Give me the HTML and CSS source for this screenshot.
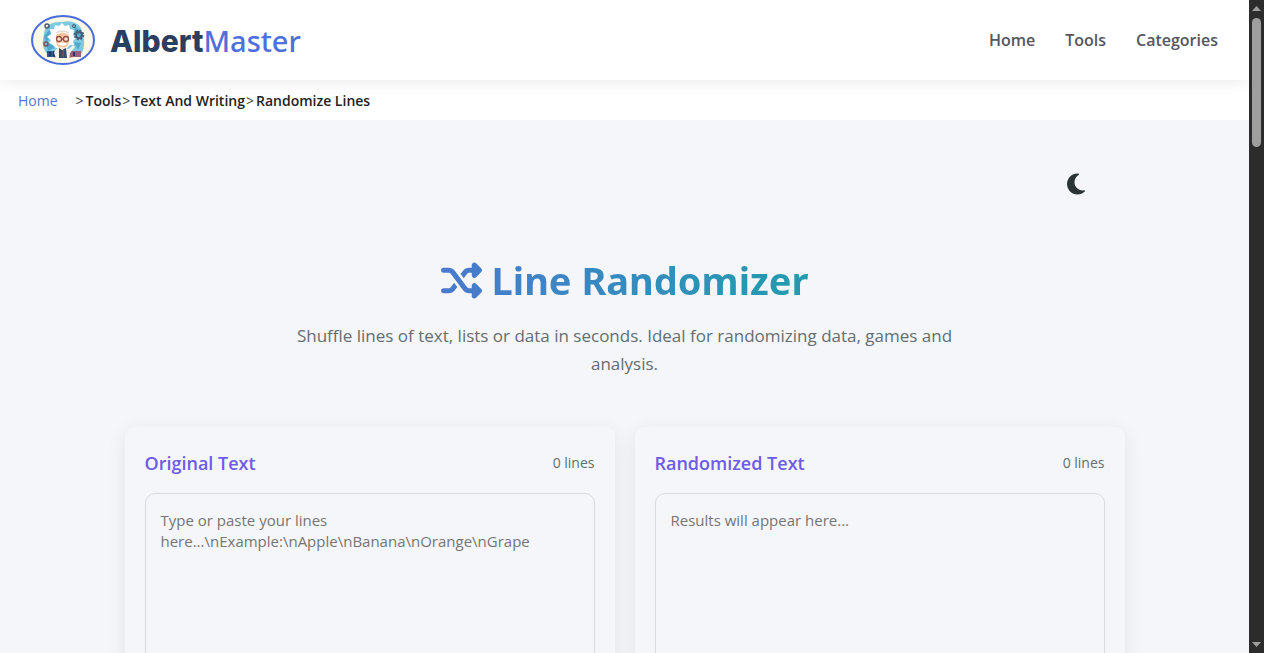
FILE: index.html
```html
<!DOCTYPE html>
<html lang="en">
<head>
<meta charset="utf-8">
<meta name="viewport" content="width=device-width, initial-scale=1">
<title>Line Randomizer - AlbertMaster</title>
<link rel="stylesheet" href="styles.css">
</head>
<body>
<div class="window">
  <div class="page">
    <header class="site-header">
      <a class="brand" href="#">
        <svg class="brand-logo" viewBox="0 0 64 50" aria-hidden="true">
          <defs><clipPath id="oval"><ellipse cx="32" cy="25" rx="31" ry="24"/></clipPath></defs>
          <ellipse cx="32" cy="25" rx="31" ry="24" fill="#fbf8e6"/>
          <g clip-path="url(#oval)">
            <path d="M14 14Q19 6 31 7Q44 4 50 13L53 24Q54 35 49 40L36 43L18 41Q10 33 12 24Z" fill="#7dc9df"/>
            <path d="M13 21l5-6 3 4-6 9zM43 11l6 4 2 8-7-5zM15 29l6-2 2 6-6 3zM43 27l7 1-3 7z" fill="#4fa9cc"/>
            <path d="M17 38l8-1 1 6-9-2zM37 37l11 0 1 4-12 2z" fill="#db8c89"/>
            <path d="M16 36h10v6H16z" fill="#30558c"/><path d="M39 36h11v6H39z" fill="#975f80"/>
            <path d="M18 37h2v4h-2zM22 37h2v4h-2zM42 37h2v4h-2z" fill="#223a68"/>
            <path d="M22 30l-4-2 2-3-4-3 4-3-1-5 4 0 1-4 4 1 3-3 3 3 4-1 1 4 4 1-1 5 3 3-3 3 1 4-4 0-3 3H25z" fill="#fff"/>
            <path d="M25 20q6-5 13 0v7q-1 6-6.500 6t-6.500-6z" fill="#f5c69c"/>
            <path d="M25 18q6-4 13 0" fill="none" stroke="#e2dbd5" stroke-width="1.500"/>
            <g fill="#f9e2ca" stroke="#944e47" stroke-width="1.300"><circle cx="28" cy="24" r="2.500"/><circle cx="35" cy="24" r="2.500"/><path d="M30.500 24h2"/></g>
            <path d="M26 29q5-3 11 0l-5 2z" fill="#fff"/>
            <path d="M25 34l6-2 7 2 4-4 2 2-5 6-1 5H25l-2-5z" fill="#f2f2eb"/>
            <path d="M28 33l3 2 4-2 1 10h-8z" fill="#344b6a"/>
            <path d="M32 35v7" stroke="#9b5960"/>
          </g>
          <g fill="none" stroke="#465b77">
            <circle cx="48" cy="20" r="3" stroke-width="2"/><circle cx="48" cy="20" r="4.500" stroke-width="1.500" stroke-dasharray="2 1.500"/>
            <circle cx="16" cy="11" r="2" stroke-width="1.500"/><circle cx="15" cy="29" r="2" stroke="#765164" stroke-width="1.500"/><circle cx="43" cy="11" r="1.500"/>
          </g>
          <ellipse cx="32" cy="25" rx="31" ry="24" fill="none" stroke="#4a6bdb" stroke-width="2"/>
        </svg>
        <span class="brand-name">Albert<span class="brand-accent">Master</span></span>
      </a>
      <nav class="site-nav" aria-label="Main">
        <a href="#">Home</a>
        <a href="#">Tools</a>
        <a href="#">Categories</a>
      </nav>
    </header>
    <nav class="breadcrumb" aria-label="Breadcrumb">
      <a href="#">Home</a><span>&gt;</span><b>Tools</b><span>&gt;</span><b>Text And Writing</b><span>&gt;</span><b>Randomize Lines</b>
    </nav>
    <main class="content">
      <div class="toolbar">
        <button class="theme-toggle" type="button" aria-label="Toggle dark mode">
          <svg viewBox="0 0 384 512" aria-hidden="true"><path d="M223.500 32C100 32 0 132.300 0 256S100 480 223.500 480c60.600 0 115.500-24.200 155.800-63.400c5-4.900 6.300-12.500 3.100-18.700s-10.100-9.700-17-8.500c-9.800 1.700-19.800 2.600-30.100 2.600c-96.900 0-175.500-78.800-175.500-176c0-65.800 36-123.100 89.300-153.300c6.100-3.500 9.200-10.500 7.700-17.300s-7.300-11.900-14.300-12.500c-6.300-.5-12.600-.8-19-.8z"/></svg>
        </button>
      </div>
      <div class="intro">
        <h1 class="title">
          <svg class="title-icon" viewBox="0 0 512 512" aria-hidden="true">
            <defs><linearGradient id="shuffle-fill"><stop offset="0" stop-color="#4a79cd"/><stop offset="1" stop-color="#467dca"/></linearGradient></defs>
            <path fill="url(#shuffle-fill)" d="M403.800 34.400c12-5 25.700-2.200 34.900 6.900l64 64c6 6 9.400 14.100 9.400 22.600s-3.400 16.600-9.400 22.600l-64 64c-9.200 9.200-22.900 11.900-34.900 6.900s-19.800-16.600-19.800-29.600V160H352c-10.100 0-19.600 4.700-25.600 12.800L284 229.300 244 176l31.200-41.600C293.300 110.200 321.800 96 352 96h32V64c0-12.900 7.800-24.600 19.800-29.600zM164 282.700L204 336l-31.200 41.600C154.700 401.800 126.200 416 96 416H32c-17.700 0-32-14.300-32-32s14.300-32 32-32H96c10.100 0 19.600-4.700 25.600-12.800L164 282.700zm274.600 188c-9.200 9.200-22.900 11.900-34.900 6.900s-19.800-16.600-19.800-29.600V416H352c-30.200 0-58.700-14.200-76.800-38.400L121.600 172.800c-6-8.100-15.500-12.800-25.600-12.800H32c-17.700 0-32-14.300-32-32s14.300-32 32-32H96c30.200 0 58.700 14.200 76.800 38.400L326.400 339.200c6 8.100 15.500 12.800 25.600 12.800h32V320c0-12.900 7.800-24.600 19.800-29.600s25.700-2.200 34.900 6.900l64 64c6 6 9.400 14.100 9.400 22.600s-3.400 16.600-9.400 22.600l-64 64z"/>
          </svg>
          <span class="title-text">Line Randomizer</span>
        </h1>
        <p class="subtitle">Shuffle lines of text, lists or data in seconds. Ideal for randomizing data, games and analysis.</p>
      </div>
      <div class="panels">
        <section class="panel">
          <div class="panel-head"><h2><label for="source">Original Text</label></h2><span class="count">0 lines</span></div>
          <textarea id="source" placeholder="Type or paste your lines here...\nExample:\nApple\nBanana\nOrange\nGrape"></textarea>
        </section>
        <section class="panel">
          <div class="panel-head"><h2><label for="result">Randomized Text</label></h2><span class="count">0 lines</span></div>
          <textarea id="result" placeholder="Results will appear here..." readonly></textarea>
        </section>
      </div>
    </main>
  </div>
  <div class="scrollbar" aria-hidden="true">
    <svg class="scroll-arrow" viewBox="0 0 15 8"><path d="M3 7l4.500-5L12 7z"/></svg>
    <div class="scroll-thumb"></div>
    <svg class="scroll-arrow scroll-down" viewBox="0 0 15 8"><path d="M3 1l4.500 5L12 1z"/></svg>
  </div>
</div>
</body>
</html>
```

FILE: styles.css
```css
* { box-sizing: border-box; }
body {
  margin: 0;
  font-family: "Open Sans", "Noto Sans", sans-serif;
  background: #f5f6fa;
  color: #2d3436;
}
h1, h2, p { margin: 0; }
a { text-decoration: none; }
.window { display: flex; height: 100vh; overflow: hidden; }
.page { flex: 1; min-width: 0; overflow: hidden; }

.site-header {
  position: relative;
  display: flex;
  align-items: center;
  justify-content: space-between;
  height: 80px;
  padding: 0 31px;
  background: #fff;
  box-shadow: 0 2px 15px rgba(0, 0, 0, 0.08);
}
.brand { display: flex; align-items: center; gap: 15px; }
.brand-logo { width: 64px; height: 50px; }
.brand-name {
  padding-top: 2px;
  font: 800 30px/40px Inter, sans-serif;
  color: #2c3e60;
}
.brand-accent {
  font-family: "Noto Sans", sans-serif;
  font-size: 29px;
  font-weight: 500;
  color: #4f6fdc;
}
.site-nav { display: flex; gap: 30px; }
.site-nav a {
  font: 600 16px/24px "Open Sans", sans-serif;
  color: #55565e;
}

.breadcrumb {
  display: flex;
  align-items: center;
  height: 40px;
  padding: 2px 18px 0;
  background: #fff;
  font: 400 14px/20px "Open Sans", sans-serif;
  color: #444;
}
.breadcrumb a { margin-right: 17px; color: #5775cf; }
.breadcrumb span { padding: 0 2px 0 1px; }
.breadcrumb b { font-weight: 600; color: #222; }

.content { max-width: 1040px; margin: 0 auto; padding: 40px 20px; }
.toolbar { display: flex; justify-content: flex-end; padding-right: 25px; }
.theme-toggle {
  display: grid;
  place-items: center;
  width: 48px;
  height: 48px;
  padding: 0;
  border: 0;
  background: none;
}
.theme-toggle svg { width: 18px; height: 24px; fill: #2d3436; }

.intro { padding: 48px 0 49px; text-align: center; }
.title {
  display: flex;
  align-items: center;
  justify-content: center;
  gap: 10px;
  margin-bottom: 18px;
  font: 700 38px/48px "Noto Sans", sans-serif;
}
.title-icon { width: 41px; height: 41px; }
.title-text {
  background: linear-gradient(90deg, #447fca, #229cae);
  background-clip: text;
  -webkit-background-clip: text;
  color: transparent;
}
.subtitle {
  max-width: 700px;
  margin: 0 auto;
  font-size: 17px;
  line-height: 28px;
  color: #636e72;
}

.panels { display: grid; grid-template-columns: 1fr 1fr; gap: 20px; }
.panel {
  padding: 20px;
  border-radius: 10px;
  background: #f5f6fa;
  box-shadow: 0 4px 20px rgba(0, 0, 0, 0.08);
}
.panel-head {
  display: flex;
  align-items: center;
  justify-content: space-between;
  height: 32px;
  margin-bottom: 14px;
}
.panel h2 { font-size: 18px; font-weight: 600; line-height: 28px; color: #6c5ce7; }
.count { font-size: 14px; line-height: 20px; color: #636e72; }
.panel textarea {
  display: block;
  width: 100%;
  height: 300px;
  padding: 16px 15px;
  border: 1px solid #d9dbe1;
  border-radius: 10px;
  background: #f5f6fa;
  font: 400 15px/21px "Open Sans", "Noto Sans", sans-serif;
  color: #2d3436;
  resize: none;
}
.panel textarea::placeholder { color: #757575; opacity: 1; }

.scrollbar {
  display: flex;
  flex-direction: column;
  align-items: center;
  width: 15px;
  padding: 4px 0;
  background: #2c2c2c;
}
.scroll-arrow { width: 15px; height: 8px; fill: #9f9f9f; }
.scroll-thumb { width: 9px; height: 20%; margin-top: 6px; border-radius: 5px; background: #9f9f9f; }
.scroll-down { margin-top: auto; }
```
